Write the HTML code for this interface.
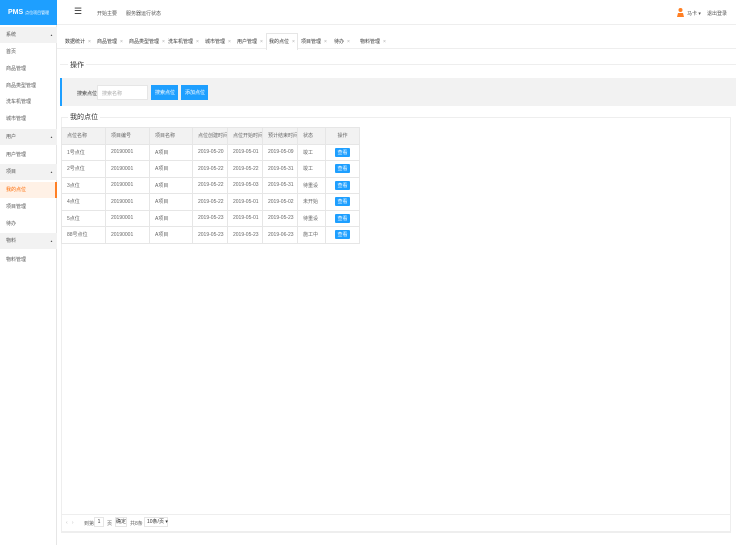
<!DOCTYPE html>
<html><head><meta charset="utf-8"><style>
*{margin:0;padding:0;box-sizing:border-box}
body{width:736px;height:545px;overflow:hidden;background:#fff;font-family:"Liberation Sans","Noto Sans CJK SC",sans-serif;font-size:5px;color:#333;position:relative}
.abs{position:absolute}
.logo{left:0;top:0;width:57px;height:25px;background:#1E9FFF;color:#fff;font-size:7px;font-weight:bold;padding:9px 0 0 8px}
.logo span{font-size:4px;font-weight:normal}
.side{left:0;top:25px;width:57px;height:520px;background:#fff;border-right:1px solid #e6e6e6}
.si{position:absolute;left:0;width:57px;height:16px;line-height:16px;padding-left:6px;color:#555}
.g{background:#f2f2f2}
.g:after{content:"▲";position:absolute;right:4px;font-size:3px;color:#555}
.act{background:#fff1e6;color:#FF6A00;border-right:2px solid #FF7F24}
.hdr{left:57px;top:0;width:679px;height:25px;border-bottom:1px solid #eee;background:#fff}
.tab{position:absolute;top:38px;color:#333}
.tab i{font-style:normal;color:#aaa;margin-left:3px}
th,td{border:1px solid #e6e6e6;height:16.5px;padding-left:5px;text-align:left;font-weight:normal;color:#666;white-space:nowrap;overflow:hidden;vertical-align:middle}
th{background:#f2f2f2}
table{border-collapse:collapse;position:absolute;left:61px;top:127px;width:298px;table-layout:fixed}
.b{display:inline-block;background:#1E9FFF;color:#fff;padding:1px 2px;border-radius:1px}
</style></head><body>
<div class="abs logo">PMS <span>点位项目管理</span></div>
<div class="abs hdr">
<div class="abs" style="left:17px;top:6px;font-size:9px;color:#333">☰</div>
<div class="abs" style="left:40px;top:10px;color:#555">开始主要</div>
<div class="abs" style="left:69px;top:10px;color:#555">服务器运行状态</div>
<div class="abs" style="left:620px;top:7px;width:7px;height:10px;"><svg width="7" height="10"><circle cx="3.5" cy="3" r="2" fill="#FF7F24"/><path d="M0 10 L1 6 L6 6 L7 10Z" fill="#FF7F24"/></svg></div>
<div class="abs" style="left:630px;top:10px;color:#555">马卡 ▾</div>
<div class="abs" style="left:650px;top:10px;color:#555">退出登录</div>
</div>
<div class="abs side">
<div class="si g" style="top:2px">系统</div>
<div class="si" style="top:19px">首页</div>
<div class="si" style="top:36px">商品管理</div>
<div class="si" style="top:53px">商品类型管理</div>
<div class="si" style="top:69px">洗车机管理</div>
<div class="si" style="top:86px">城市管理</div>
<div class="si g" style="top:104px">用户</div>
<div class="si" style="top:122px">用户管理</div>
<div class="si g" style="top:139px">项目</div>
<div class="si act" style="top:157px">我的点位</div>
<div class="si" style="top:174px">项目管理</div>
<div class="si" style="top:191px">待办</div>
<div class="si g" style="top:208px">物料</div>
<div class="si" style="top:227px">物料管理</div>
</div>
<div class="abs" style="left:57px;top:26px;width:679px;height:23px;border-bottom:1px solid #eee"></div>
<div class="abs" style="left:266px;top:33px;width:32px;height:17px;background:#fff;border:1px solid #e6e6e6;border-bottom:none"></div>
<div class="tab" style="left:65px">数据统计<i>×</i></div>
<div class="tab" style="left:97px">商品管理<i>×</i></div>
<div class="tab" style="left:129px">商品类型管理<i>×</i></div>
<div class="tab" style="left:168px">洗车机管理<i>×</i></div>
<div class="tab" style="left:205px">城市管理<i>×</i></div>
<div class="tab" style="left:237px">用户管理<i>×</i></div>
<div class="tab" style="left:269px">我的点位<i>×</i></div>
<div class="tab" style="left:301px">项目管理<i>×</i></div>
<div class="tab" style="left:334px">待办<i>×</i></div>
<div class="tab" style="left:360px">物料管理<i>×</i></div>
<div class="abs" style="left:60px;top:64px;width:676px;border-top:1px solid #eee"></div>
<div class="abs" style="left:68px;top:60px;font-size:7px;background:#fff;padding:0 2px">操作</div>
<div class="abs" style="left:60px;top:78px;width:676px;height:28px;background:#f2f2f2;border-left:2px solid #1E9FFF"></div>
<div class="abs" style="left:77px;top:90px;color:#333">搜索点位</div>
<div class="abs" style="left:97px;top:85px;width:51px;height:15px;background:#fff;border:1px solid #e6e6e6;padding:4px 0 0 4px;color:#aaa">搜索名称</div>
<div class="abs" style="left:151px;top:85px;width:27px;height:15px;background:#1E9FFF;color:#fff;padding:4px 0 0 4px">搜索点位</div>
<div class="abs" style="left:181px;top:85px;width:27px;height:15px;background:#1E9FFF;color:#fff;padding:4px 0 0 4px">添加点位</div>
<div class="abs" style="left:61px;top:117px;width:670px;height:416px;border:1px solid #eee;border-top:none"></div>
<div class="abs" style="left:61px;top:117px;width:670px;border-top:1px solid #eee"></div>
<div class="abs" style="left:68px;top:112px;font-size:7px;background:#fff;padding:0 2px">我的点位</div>
<table>
<colgroup><col style="width:44px"><col style="width:44px"><col style="width:43px"><col style="width:35px"><col style="width:35px"><col style="width:35px"><col style="width:28px"><col style="width:34px"></colgroup>
<tr><th>点位名称</th><th>项目编号</th><th>项目名称</th><th>点位创建时间</th><th>点位开始时间</th><th>预计结束时间</th><th>状态</th><th style="text-align:center;padding:0">操作</th></tr>
<tr><td>1号点位</td><td>20190001</td><td>A项目</td><td>2019-05-20</td><td>2019-05-01</td><td>2019-05-09</td><td>竣工</td><td style="text-align:center;padding:0"><span class="b">查看</span></td></tr>
<tr><td>2号点位</td><td>20190001</td><td>A项目</td><td>2019-05-22</td><td>2019-05-22</td><td>2019-05-31</td><td>竣工</td><td style="text-align:center;padding:0"><span class="b">查看</span></td></tr>
<tr><td>3点位</td><td>20190001</td><td>A项目</td><td>2019-05-22</td><td>2019-05-03</td><td>2019-05-31</td><td>待重设</td><td style="text-align:center;padding:0"><span class="b">查看</span></td></tr>
<tr><td>4点位</td><td>20190001</td><td>A项目</td><td>2019-05-22</td><td>2019-05-01</td><td>2019-05-02</td><td>未开始</td><td style="text-align:center;padding:0"><span class="b">查看</span></td></tr>
<tr><td>5点位</td><td>20190001</td><td>A项目</td><td>2019-05-23</td><td>2019-05-01</td><td>2019-05-23</td><td>待重设</td><td style="text-align:center;padding:0"><span class="b">查看</span></td></tr>
<tr><td>88号点位</td><td>20190001</td><td>A项目</td><td>2019-05-23</td><td>2019-05-23</td><td>2019-06-23</td><td>施工中</td><td style="text-align:center;padding:0"><span class="b">查看</span></td></tr>
</table>
<div class="abs" style="left:61px;top:514px;width:670px;border-top:1px solid #eee"></div>
<div class="abs" style="left:61px;top:531px;width:670px;border-top:1px solid #eee"></div>
<div class="abs" style="left:66px;top:520px;color:#bbb">‹ &nbsp; ›</div>
<div class="abs" style="left:84px;top:520px;color:#666">到第</div>
<div class="abs" style="left:94px;top:517px;width:10px;height:10px;border:1px solid #e6e6e6;text-align:center;line-height:9px">1</div>
<div class="abs" style="left:107px;top:520px;color:#666">页</div>
<div class="abs" style="left:115px;top:517px;width:12px;height:10px;border:1px solid #e6e6e6;text-align:center;line-height:9px">确定</div>
<div class="abs" style="left:130px;top:520px;color:#666">共8条</div>
<div class="abs" style="left:144px;top:517px;width:24px;height:10px;border:1px solid #e6e6e6;line-height:9px;padding-left:2px;white-space:nowrap">10条/页 ▾</div>
</body></html>
